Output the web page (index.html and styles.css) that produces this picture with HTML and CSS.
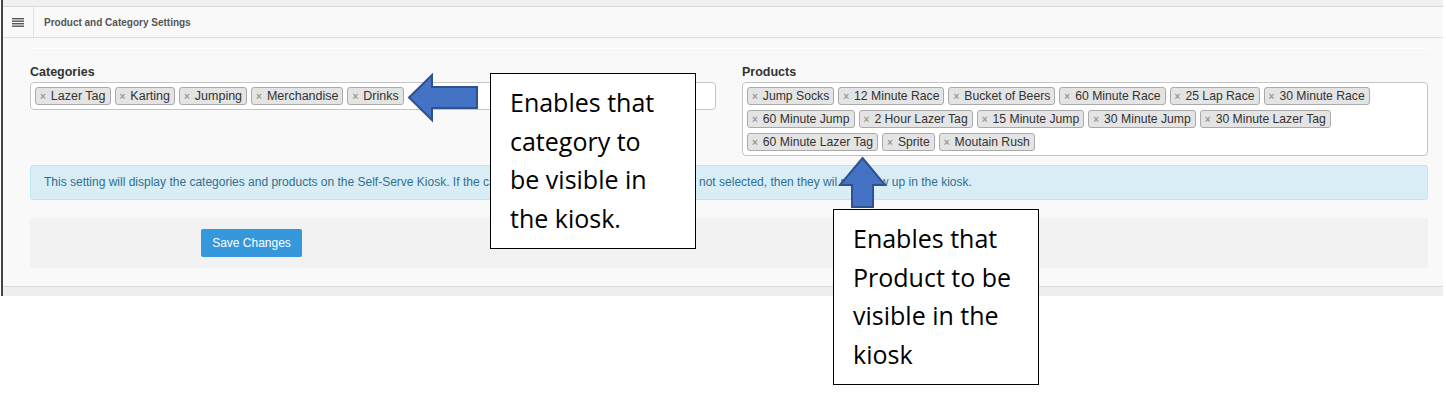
FILE: index.html
```html
<!DOCTYPE html>
<html lang="en">
<head>
    <meta charset="UTF-8">
    <title>Product and Category Settings</title>
    <link rel="stylesheet" href="styles.css">
</head>
<body>
    <div class="page">
        <div class="top-strip"></div>
        <div class="portlet-head">
            <span class="menu-btn">
                <svg width="12" height="9" viewBox="0 0 12 9">
                    <rect x="0" y="0" width="12" height="1.4" fill="#555"/>
                    <rect x="0" y="2.5" width="12" height="1.4" fill="#555"/>
                    <rect x="0" y="5" width="12" height="1.4" fill="#555"/>
                    <rect x="0" y="7.5" width="12" height="1.4" fill="#555"/>
                </svg>
            </span>
            <span class="caption">Product and Category Settings</span>
        </div>

        <div class="portlet-body">
            <div class="rule"></div>
            <div class="fields">
                <div class="field">
                    <label>Categories</label>
                    <div class="tagbox">
                        <span class="tag"><i>×</i>Lazer Tag</span>
                        <span class="tag"><i>×</i>Karting</span>
                        <span class="tag"><i>×</i>Jumping</span>
                        <span class="tag"><i>×</i>Merchandise</span>
                        <span class="tag"><i>×</i>Drinks</span>
                    </div>
                </div>
                <div class="field">
                    <label>Products</label>
                    <div class="tagbox products">
                        <span class="tag"><i>×</i>Jump Socks</span>
                        <span class="tag"><i>×</i>12 Minute Race</span>
                        <span class="tag"><i>×</i>Bucket of Beers</span>
                        <span class="tag"><i>×</i>60 Minute Race</span>
                        <span class="tag"><i>×</i>25 Lap Race</span>
                        <span class="tag"><i>×</i>30 Minute Race</span>
                        <span class="tag"><i>×</i>60 Minute Jump</span>
                        <span class="tag"><i>×</i>2 Hour Lazer Tag</span>
                        <span class="tag"><i>×</i>15 Minute Jump</span>
                        <span class="tag"><i>×</i>30 Minute Jump</span>
                        <span class="tag"><i>×</i>30 Minute Lazer Tag</span>
                        <span class="tag"><i>×</i>60 Minute Lazer Tag</span>
                        <span class="tag"><i>×</i>Sprite</span>
                        <span class="tag"><i>×</i>Moutain Rush</span>
                    </div>
                </div>
            </div>

            <div class="alert-info">
                This setting will display the categories and products on the Self-Serve Kiosk. If the categories and products in the fields are not selected, then they wil not show up in the kiosk.
            </div>

            <div class="form-actions">
                <button class="btn-save">Save Changes</button>
            </div>
        </div>
        <div class="page-foot"></div>
    </div>

    <!-- annotations drawn over the screenshot -->
    <svg class="arrow arrow-left" width="74" height="50" viewBox="405 73 74 50">
        <polygon points="409,97.5 432,75 432,87 477,87 477,108 432,108 432,120" fill="#4472c4" stroke="#2f528f" stroke-width="2"/>
    </svg>
    <svg class="arrow arrow-up" width="50" height="54" viewBox="838 155 50 54">
        <polygon points="862.5,158 885,185 873,185 873,207 852,207 852,185 840,185" fill="#4472c4" stroke="#2f528f" stroke-width="2"/>
    </svg>

    <div class="callout callout-cat">Enables that<br>category to<br>be visible in<br>the kiosk.</div>
    <div class="callout callout-prod">Enables that<br>Product to be<br>visible in the<br>kiosk</div>
</body>
</html>
```

FILE: styles.css
```css
body {
    margin: 0;
    background: #fff;
    font-family: 'Liberation Sans', Arial, sans-serif;
    color: #333;
}

.page {
    margin: 0 3px 0 1px;
    border-left: 2px solid #444;
    background: #f9f9f9;
}

.top-strip {
    height: 6px;
    background: #f0f0f0;
    border-bottom: 1px solid #d8d8d8;
}

.portlet-head {
    height: 30px;
    display: flex;
    align-items: center;
    border-bottom: 1px solid #dedede;
}

.menu-btn {
    width: 31px;
    height: 30px;
    display: flex;
    align-items: center;
    justify-content: center;
    border-right: 1px solid #e4e4e4;
    margin-left: -1px;
}

.caption {
    margin-left: 10px;
    font-size: 10px;
    font-weight: bold;
    color: #555;
}

.portlet-body {
    padding: 10px 15px 18px 27px;
}

.rule {
    height: 1px;
    background: #fff;
    margin-bottom: 16px;
}

.fields {
    display: grid;
    grid-template-columns: 1fr 1fr;
    gap: 26px;
    align-items: start;
}

.field label {
    display: block;
    font-size: 12.5px;
    line-height: 15px;
    font-weight: bold;
    color: #333;
    margin-bottom: 2px;
}

.tagbox {
    background: #fff;
    border: 1px solid #c4c4c4;
    border-radius: 4px;
    padding: 4px 4px;
    display: flex;
    flex-wrap: wrap;
    gap: 5px 4px;
}

.tag {
    display: inline-flex;
    align-items: center;
    height: 16px;
    padding: 0 4px;
    background: #e4e4e4;
    border: 1px solid #aaa;
    border-radius: 3px;
    font-size: 12.5px;
    color: #333;
    white-space: nowrap;
}

.products .tag {
    font-size: 12.2px;
}

.tag i {
    font-style: normal;
    font-weight: bold;
    font-size: 10px;
    color: #999;
    margin-right: 5px;
}

.alert-info {
    margin-top: 9px;
    padding: 10px 13px;
    background: #d9edf7;
    border: 1px solid #bce8f1;
    border-radius: 3px;
    color: #31708f;
    font-size: 12px;
    line-height: 13px;
    white-space: nowrap;
}

.form-actions {
    margin-top: 18px;
    padding: 11px 171px;
    background: #f2f2f2;
}

.btn-save {
    width: 101px;
    height: 28px;
    border: none;
    border-radius: 2px;
    background: #3598dc;
    color: #fff;
    font-family: 'Liberation Sans', Arial, sans-serif;
    font-size: 12px;
    padding: 0;
}

.page-foot {
    height: 9px;
    background: #eee;
    border-top: 1px solid #dcdcdc;
}

.arrow {
    position: absolute;
}

.arrow-left {
    left: 405px;
    top: 73px;
}

.arrow-up {
    left: 838px;
    top: 155px;
}

.callout {
    position: absolute;
    width: 185px;
    height: 156px;
    padding: 9px 0 9px 19px;
    background: #fff;
    border: 1px solid #000;
    font-family: 'Open Sans', sans-serif;
    font-size: 25px;
    line-height: 38.67px;
    color: #000;
    white-space: nowrap;
}

.callout-cat {
    left: 490px;
    top: 73px;
}

.callout-prod {
    left: 833px;
    top: 209px;
}
```
